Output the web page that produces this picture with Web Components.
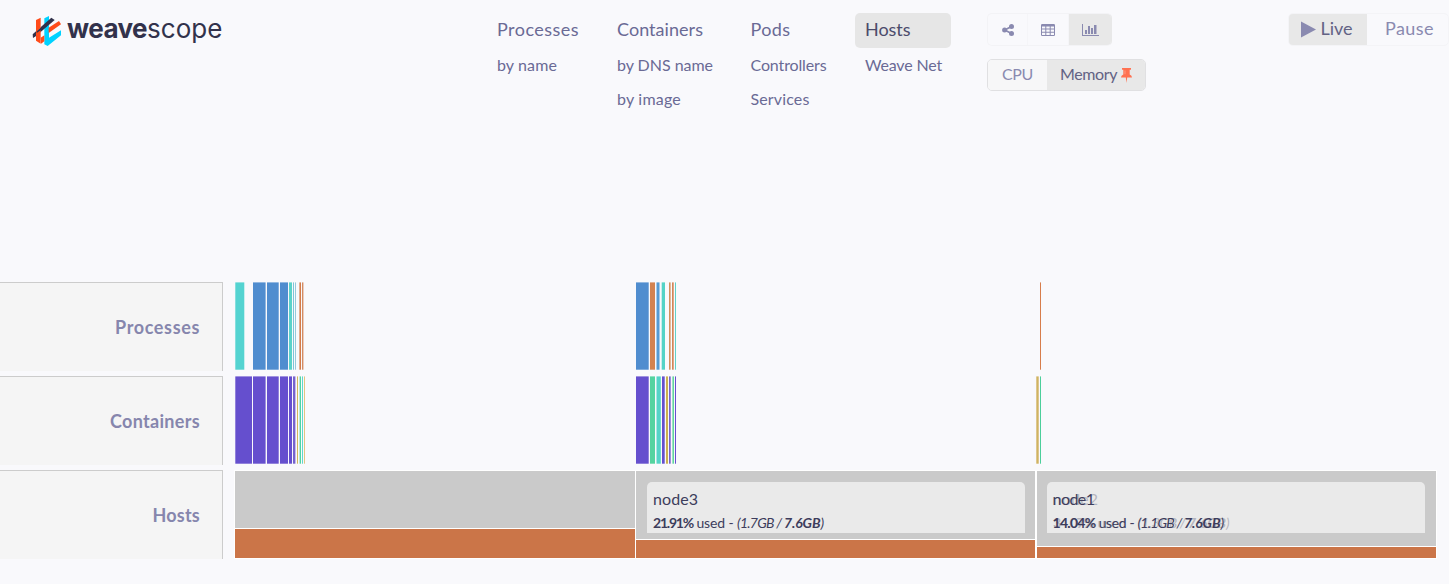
<!DOCTYPE html>
<html lang="en"><head><meta charset="utf-8"><title>Weave Scope</title>
<style>html,body{margin:0;height:100%;background:#f9f9fc;overflow:hidden}body{font-family:Lato,"Open Sans",sans-serif;color:#6a6a95}</style></head>
<body><scope-app></scope-app>
<script>
const define=(name,html,init)=>customElements.define(name,class extends HTMLElement{
  connectedCallback(){ if(this.shadowRoot)return; this.attachShadow({mode:'open'}).innerHTML=html; if(init)init.call(this,this.shadowRoot); }
});

/* A single line of text, tracked so that it fills the width in "w". */
define('fit-text','<style>:host{display:block;white-space:nowrap;line-height:20px;height:20px}span{display:inline-block;transform:translateY(-1px)}</style><span><slot></slot></span>',function(r){
  const s=r.querySelector('span'),w=+this.getAttribute('w');
  if(w){const n=this.textContent.length;const d=(w-s.getBoundingClientRect().width)/n;s.style.letterSpacing=d.toFixed(3)+'px';}
});

define('weave-logo',`<style>:host{display:flex;width:220px;height:32px;color:#32324b}svg{flex:none}
.a,.b{font-family:Inter,sans-serif;font-size:26px;padding-top:5px}.a{font-weight:700;margin-left:4px}</style>
<svg width="32" height="32" viewBox="33 30 96 96">
<path d="M73 40L87 33V98L123 76V91L83 123L73 118Z" fill="#00d2ff"/>
<path d="M86 68L117 48L123 58L86 84Z" fill="#ff4b19"/>
<path d="M62 98L73 91V109L63 116Z" fill="#ff4b19"/>
<path d="M38 88L94 38L104 45L47 94L39 99Z" fill="#32324b"/>
<path d="M48 45L62 38V68L50 79V84L62 76V116L48 107Z" fill="#ff4b19"/>
</svg><fit-text class="a" w="80">weave</fit-text><fit-text class="b" w="75.5">scope</fit-text>`);

define('topology-group',`<style>:host{display:block;font-size:16px;color:#6a6a95}
.main{height:35px;border-radius:5px;padding:0 10px 1px;box-sizing:border-box;font-size:18px;display:flex;align-items:center}
:host([active]) .main{background:#e6e6e6;color:#4b4b6b}
.subs{padding:8px 10px 0;display:grid;gap:14px}</style><div class="main"><slot name="main"></slot></div><div class="subs"><slot></slot></div>`);

define('view-switch',`<style>:host{display:flex;width:125px;height:33px;box-sizing:border-box;border:1px solid #f3f3f6;border-right-color:#e8e8e8;border-radius:5px;overflow:hidden}
i{flex:0 0 40px;display:flex;align-items:center;justify-content:center;border-right:1px solid #f5f5f8;box-sizing:border-box}
i:nth-of-type(2){flex-basis:41px}i:last-child{flex:1;background:#e8e8e8;border:0}svg{fill:#8a8ab0;display:block}</style>
<i><svg width="12" height="12" viewBox="0 0 12 12"><path d="M2.8 6L9.4 2.5M2.8 6L9.4 9.5" stroke="#8a8ab0" stroke-width="1.7"/><circle cx="2.6" cy="6" r="2.5"/><circle cx="9.5" cy="2.5" r="2.5"/><circle cx="9.5" cy="9.5" r="2.5"/></svg></i>
<i><svg width="14" height="12" viewBox="0 0 14 12"><path fill-rule="evenodd" d="M1.2 0H12.8Q14 0 14 1.2V10.8Q14 12 12.8 12H1.2Q0 12 0 10.8V1.2Q0 0 1.2 0ZM1 2.5V4.6H4.3V2.5ZM5.3 2.5V4.6H8.7V2.5ZM9.7 2.5V4.6H13V2.5ZM1 5.6V7.8H4.3V5.6ZM5.3 5.6V7.8H8.7V5.6ZM9.7 5.6V7.8H13V5.6ZM1 8.8V11H4.3V8.8ZM5.3 8.8V11H8.7V8.8ZM9.7 8.8V11H13V8.8Z"/></svg></i>
<i><svg width="17" height="12" viewBox="0 0 17 12"><path d="M0 0H1V11H17V12H0ZM3 6H5V10H3ZM6 2H8V10H6ZM9 4H11V10H9ZM12 1H14.5V10H12Z"/></svg></i>`);

define('metric-switch',`<style>:host{display:flex;width:159px;height:32px;box-sizing:border-box;border:1px solid #e0e0e2;border-radius:5px;overflow:hidden;font-size:16px;color:#8a8ab0}
div{display:flex;align-items:center;box-sizing:border-box}.c{width:59px;padding-left:14px;background:#f7f7f8}.m{flex:1;padding-left:13px;background:#e8e8e8;color:#626284;gap:4px}</style>
<div class="c"><fit-text w="31">CPU</fit-text></div><div class="m"><fit-text w="57">Memory</fit-text><svg width="11" height="15" viewBox="0 0 11 15"><path fill="#ff7151" d="M1 0H10V1.7H8.7V6.4Q11 7.3 11 9.6H6.2L5.5 15L4.8 9.6H0Q0 7.3 2.3 6.4V1.7H1Z"/><path d="M4 2.5V6.2" stroke="#ffad99" stroke-width=".7"/></svg></div>`);

define('time-control',`<style>:host{display:flex;width:161px;height:33px;box-sizing:border-box;border:1px solid #f4f4f7;border-radius:5px;overflow:hidden;font-size:18px;color:#8a8ab0}
div{display:flex;align-items:center;box-sizing:border-box;padding-bottom:1px}.l{width:78px;padding-left:12px;gap:5px;background:#e8e8e8;color:#626284}.p{padding-left:18.5px}</style>
<div class="l"><svg width="15" height="17"><path d="M0 .5L15 8.5L0 16.5Z" fill="#8a8ab0"/></svg><fit-text w="32">Live</fit-text></div><div class="p"><fit-text w="49">Pause</fit-text></div>`);

define('scope-header',`<style>:host{display:grid;grid-template-columns:487px 120px 133.5px 114.5px 132px 301px 1fr;height:282px;padding-top:13px;box-sizing:border-box}
.brand{padding:2px 0 0 31px}topology-group[active]{width:96px}.controls{display:grid;gap:13px;align-content:start}time-control{margin-left:-.5px}</style>
<div class="brand"><weave-logo></weave-logo></div>
<topology-group><fit-text slot="main" w="82">Processes</fit-text><fit-text w="60">by name</fit-text></topology-group>
<topology-group><fit-text slot="main" w="86">Containers</fit-text><fit-text w="96">by DNS name</fit-text><fit-text w="64">by image</fit-text></topology-group>
<topology-group><fit-text slot="main" w="40">Pods</fit-text><fit-text w="76">Controllers</fit-text><fit-text w="59">Services</fit-text></topology-group>
<topology-group active><fit-text slot="main" w="45.5">Hosts</fit-text><fit-text w="77">Weave Net</fit-text></topology-group>
<div class="controls"><view-switch></view-switch><metric-switch></metric-switch></div><time-control></time-control>`);

define('row-label',`<style>:host{display:flex;align-items:center;justify-content:flex-end;box-sizing:border-box;width:223px;height:88.5px;border:solid #ccc;border-width:1px 1px 0 0;background:#f5f5f5;padding:2px 22px 0 0;font-size:18px;font-weight:700;color:#8686ad}</style><slot></slot>`);

/* Narrow usage bars: each entry is "left right colour". */
define('usage-bars','<style>:host{display:block;height:88px}svg{display:block}</style><svg width="1214" height="88"></svg>',function(r){
  r.querySelector('svg').innerHTML=this.getAttribute('bars').split(',').map(b=>{const [x,e,c]=b.trim().split(' ');
    return `<rect x="${x-235}" y="0.4" width="${e-x}" height="87.3" fill="${c}"/>`}).join('');
});

define('host-cell',`<style>:host{display:flex;flex-direction:column;height:87px;box-shadow:0 0 0 1px #fff}
.free{flex:1;background:#cacaca;padding:11px var(--right,11px) 0 var(--left,11px);border-bottom:1px solid #fff;box-sizing:border-box}.used{background:#cb7548;height:var(--used)}</style>
<div class="free"><slot></slot></div><div class="used"></div>`);

define('host-info',`<style>:host{display:block;height:51px;background:#eaeaea;border-radius:5px 5px 0 0;padding:8px 6px 0;box-sizing:border-box;color:#3d3d5c;position:relative}
.n{font-size:16px}.d{font-size:14px;display:flex;margin-top:4px}.d fit-text{white-space:pre}.e{font-style:italic}.b{font-weight:700}
.ghost{position:absolute;left:6px;top:8px;opacity:.3}.front{position:relative}</style><div class="body"></div>`,function(r){
  const line=(n,p,m,w)=>`<fit-text class="n" w="${w[0]}">${n}</fit-text><div class="d"><fit-text class="b" w="${w[1]}">${p}</fit-text><fit-text w="${w[2]}"> used - </fit-text><fit-text class="e" w="${w[3]}">(${m} / </fit-text><fit-text class="e b" w="${w[4]}">7.6GB</fit-text><fit-text class="e">)</fit-text></div>`;
  const f=this.getAttribute('data').split(',');
  let h=line(f[0],f[1],f[2],f.slice(3));
  if(this.hasAttribute('ghost')){const g=this.getAttribute('ghost').split(',');h='<div class="ghost">'+line(g[0],g[1],g[2],g.slice(3))+'</div><div class="front">'+h+'</div>';}
  r.querySelector('.body').innerHTML=h;
});

define('resource-view',`<style>:host{display:grid;grid-template-columns:223px 1214px;column-gap:12px;row-gap:5.5px}.hosts{display:grid;grid-template-columns:400px 399px 400px;gap:1px;padding-top:1px}
.second{--used:18px;--right:10px}.third{--used:11px;--left:10px;margin-left:1px}.third host-info{padding-left:5.5px}</style>
<row-label><fit-text w="85">Processes</fit-text></row-label>
<usage-bars bars="235.3 244.3 #54d3d1,253 265.6 #508dcf,267 278.7 #508dcf,280 288 #508dcf,289 292 #5bd2c9,293 294 #7dc3d8,295 296 #94cbdc,299.4 301 #d37b49,302 303.4 #d58b61,636 648.7 #508dcf,650 655 #d38350,656.5 659.5 #559bd3,661.7 665 #54d3c7,669 670.6 #d3925d,672 673.7 #d38659,675 676 #61d1c9,1040 1041 #d77d4b"></usage-bars>
<row-label><fit-text w="90">Containers</fit-text></row-label>
<usage-bars bars="235.3 252 #654fce,253 265.6 #654fce,267 278.7 #654fce,280 288 #654fce,289 292 #654fce,293 295.4 #7562ce,297 298 #d2b65c,299.6 301 #50d4a0,302 303 #61d8cb,304 305 #e0c582,636 648.7 #654fce,650 655 #54d3a0,656.5 660.8 #54d3c7,662 664.7 #654fce,666 668 #cbb04f,669 670.7 #7562ce,672.4 674 #61d69d,675 676 #654fce,1036.3 1038.7 #d1b361,1040 1041 #4ccf9b"></usage-bars>
<row-label><fit-text w="47.5">Hosts</fit-text></row-label>
<div class="hosts"><host-cell style="--used:29px"></host-cell><host-cell class="second"><host-info data="node3,21.91%,1.7GB,45,40,44,47,36.5"></host-info></host-cell><host-cell class="third"><host-info data="node1,14.04%,1.1GB,42,43,42,46.5,36.5" ghost="node2,34.07%,1.3GB,45,41,44,50,38"></host-info></host-cell></div>`);
define('scope-app','<style>:host{display:block;width:1449px;height:584px;overflow:hidden;background:#f9f9fc}</style><scope-header></scope-header><resource-view></resource-view>');
</script></body></html>
